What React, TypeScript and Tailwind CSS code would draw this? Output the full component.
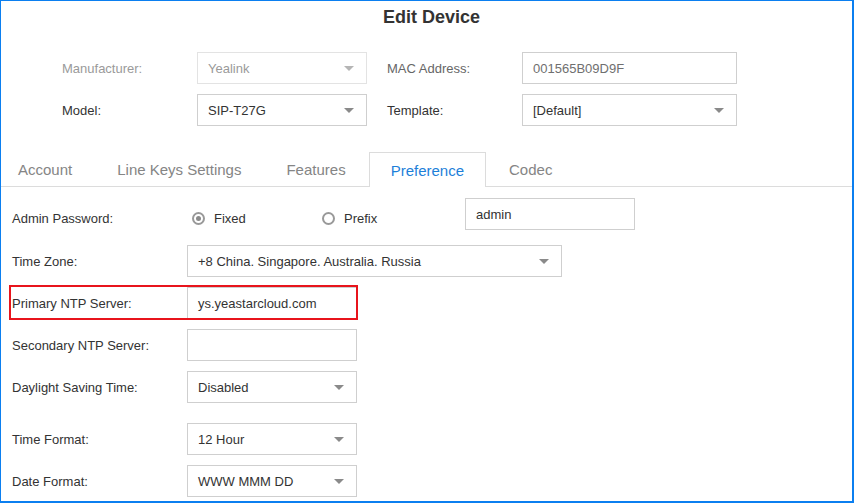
import { ReactNode } from 'react';

const font = { fontFamily: '"Liberation Sans", Arial, sans-serif' };

const Arrow = ({ muted }: { muted?: boolean }) => (
  <svg width="10" height="5" viewBox="0 0 10 5" className="flex-shrink-0">
    <path d="M0 0H10L5 5Z" fill={muted ? '#b5b5b5' : '#8a8a8a'} />
  </svg>
);

const Select = ({
  value,
  width,
  disabled,
}: {
  value: string;
  width: string;
  disabled?: boolean;
}) => (
  <div
    className={`flex h-[32px] ${width} items-center justify-between border bg-white pl-[10px] pr-[12px] text-[13px] ${
      disabled ? 'border-[#e3e3e3] text-[#9a9a9a]' : 'border-[#cfcfcf] text-[#333]'
    }`}
  >
    <span className="pt-[2px]">{value}</span>
    <Arrow muted={disabled} />
  </div>
);

const Input = ({ value, width, className }: { value?: string; width: string; className?: string }) => (
  <div
    className={`flex h-[32px] ${width} items-center border border-[#cfcfcf] bg-white pt-[2px] pl-[10px] text-[13px] ${
      className ?? 'text-[#333]'
    }`}
  >
    {value}
  </div>
);

const Radio = ({ checked, label, width }: { checked?: boolean; label: string; width: string }) => (
  <div className={`flex ${width} items-center gap-[9px]`}>
    <span className="flex h-[13px] w-[13px] items-center justify-center rounded-full border-2 border-[#999]">
      {checked && <span className="h-[5px] w-[5px] rounded-full bg-[#8a8a8a]" />}
    </span>
    <span className="text-[13px] text-[#333]">{label}</span>
  </div>
);

const Row = ({ label, children, className }: { label: string; children: ReactNode; className?: string }) => (
  <div className={`flex h-[32px] items-center ${className ?? ''}`}>
    <div className="w-[175px] pt-[2px] text-[13px] text-[#333]">{label}</div>
    {children}
  </div>
);

const tabs = ['Account', 'Line Keys Settings', 'Features', 'Preference', 'Codec'];

export default function App() {
  return (
    <div
      style={font}
      className="relative h-[503px] w-[854px] overflow-hidden border-t border-l border-r-2 border-b-2 border-[#0b7ff0] bg-white"
    >
      <h1 className="mt-[5px] pl-[10px] text-center text-[18px] leading-[22px] font-bold text-[#333]">
        Edit Device
      </h1>

      {/* device fields */}
      <div className="mt-[24px] flex flex-col gap-[10px] pl-[61px]">
        <div className="flex items-center">
          <div className="w-[135px] pt-[2px] text-[13px] text-[#9a9a9a]">Manufacturer:</div>
          <Select value="Yealink" width="w-[170px]" disabled />
          <div className="ml-[20px] w-[135px] pt-[2px] text-[13px] text-[#666]">MAC Address:</div>
          <Input value="001565B09D9F" width="w-[215px]" className="text-[#6f6f6f]" />
        </div>
        <div className="flex items-center">
          <div className="w-[135px] pt-[2px] text-[13px] text-[#333]">Model:</div>
          <Select value="SIP-T27G" width="w-[170px]" />
          <div className="ml-[20px] w-[135px] pt-[2px] text-[13px] text-[#333]">Template:</div>
          <Select value="[Default]" width="w-[215px]" />
        </div>
      </div>

      {/* tabs */}
      <div className="mt-[26px] flex h-[35px] items-stretch gap-[1px] border-b border-[#dcdcdc]">
        {tabs.map((t, i) => {
          const active = t === 'Preference';
          return (
            <div
              key={t}
              className={`-mb-px flex items-center pt-[2px] text-[15px] ${i === 0 ? 'pl-[16px] pr-[21px]' : 'px-[21px]'} ${
                active
                  ? 'border border-b-0 border-[#dcdcdc] bg-white text-[#1d7fd9]'
                  : 'border border-transparent text-[#858585]'
              }`}
            >
              {t}
            </div>
          );
        })}
      </div>

      {/* preference form */}
      <div className="flex flex-col pl-[11px]">
        <div className="mt-[11px] flex h-[32px] items-start">
          <div className="w-[175px] pt-[13px] text-[13px] leading-[16px] text-[#333]">Admin Password:</div>
          <div className="flex items-center pt-[11px] pl-[5px]">
            <Radio checked label="Fixed" width="w-[130px]" />
            <Radio label="Prefix" width="w-[143px]" />
          </div>
          <Input value="admin" width="w-[170px]" />
        </div>

        <div className="mt-[15px] flex flex-col gap-[10px]">
          <Row label="Time Zone:">
            <Select value="+8 China. Singapore. Australia. Russia" width="w-[375px]" />
          </Row>
          <div className="relative">
            <Row label="Primary NTP Server:">
              <Input value="ys.yeastarcloud.com" width="w-[170px]" />
            </Row>
            <div className="pointer-events-none absolute top-[-2px] left-[-3px] h-[35px] w-[349px] border-2 border-[#e8141c]" />
          </div>
          <Row label="Secondary NTP Server:">
            <Input width="w-[170px]" />
          </Row>
          <Row label="Daylight Saving Time:">
            <Select value="Disabled" width="w-[170px]" />
          </Row>
          <Row label="Time Format:" className="mt-[10px]">
            <Select value="12 Hour" width="w-[170px]" />
          </Row>
          <Row label="Date Format:">
            <Select value="WWW MMM DD" width="w-[170px]" />
          </Row>
        </div>
      </div>
    </div>
  );
}
